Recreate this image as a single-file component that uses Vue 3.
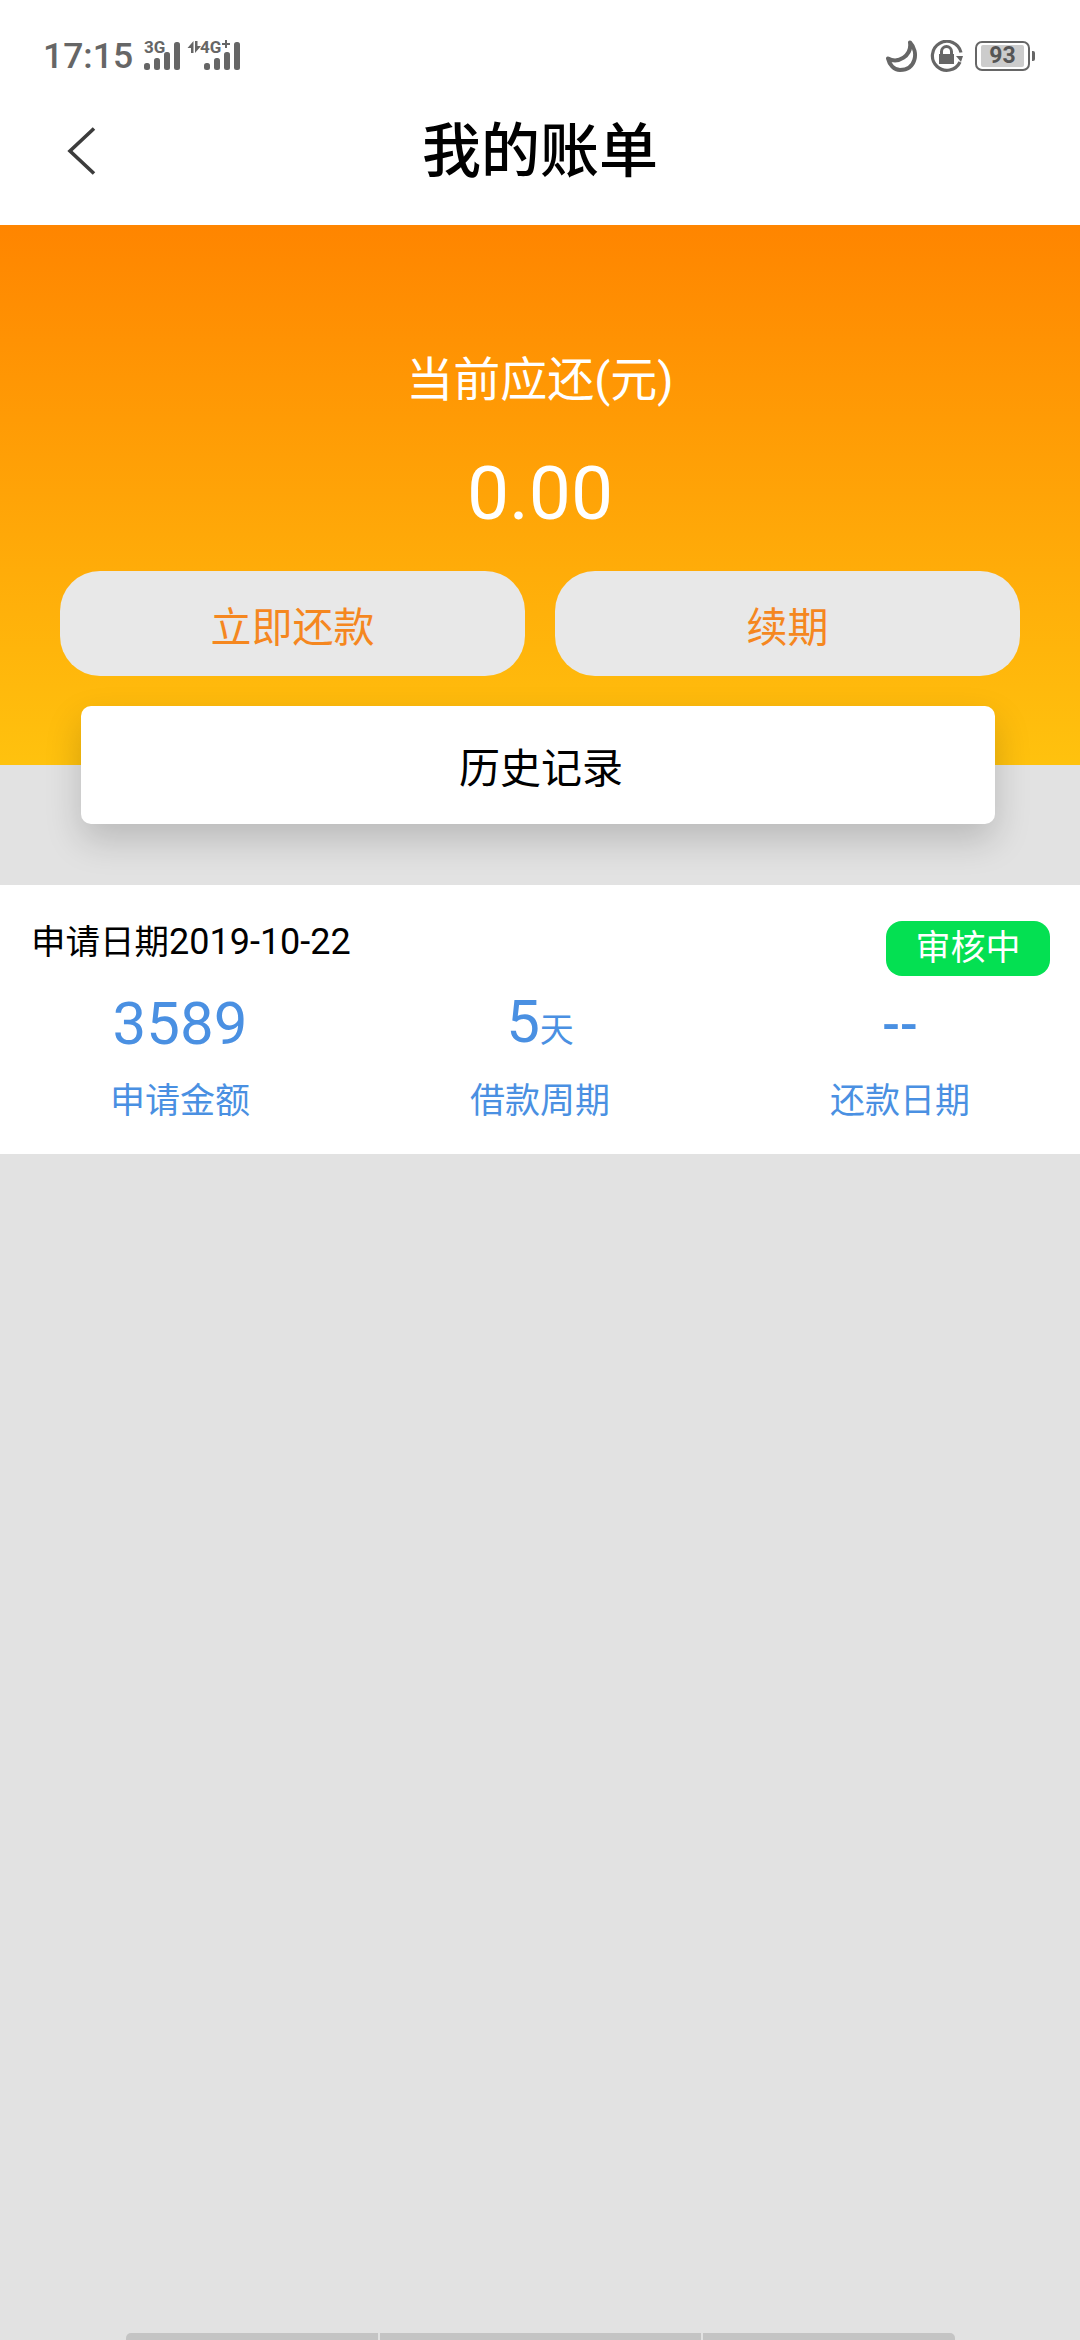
<script setup>
const stats = [
  { key: 'amount', value: '3589', unit: '', label: '申请金额' },
  { key: 'period', value: '5', unit: '天', label: '借款周期' },
  { key: 'repay', value: '--', unit: '', label: '还款日期' },
];
const signalBars = [
  { x: 2, y: 22, w: 6, h: 7 },
  { x: 12, y: 17, w: 6, h: 12 },
  { x: 22, y: 11, w: 6, h: 18 },
  { x: 32, y: 1, w: 6, h: 28 },
  { x: 62, y: 22, w: 6, h: 7 },
  { x: 72, y: 17, w: 6, h: 12 },
  { x: 82, y: 11, w: 6, h: 18 },
  { x: 92, y: 1, w: 6, h: 28 },
];
</script>

<template>
  <div class="page">
    <header class="top">
      <div class="status-bar">
        <span class="time">17:15</span>
        <svg class="signal" width="100" height="38" viewBox="0 -8 100 38">
          <text x="2" y="11.5" class="signal-text">3G</text>
          <rect v-for="bar in signalBars" :key="bar.x" :x="bar.x" :y="bar.y" :width="bar.w" :height="bar.h" rx="2.5" fill="#666" />
          <path d="M51.5 0L51.5 12L49 12L49 7L45.5 7Z M53 12L53 0L55.5 0L55.5 5L59 5Z" fill="#666" />
          <text x="58" y="11.5" class="signal-text">4G</text>
          <path d="M83 -1h2v3h3v2h-3v3h-2v-3h-3v-2h3z" fill="#666" />
        </svg>
        <div class="status-right">
          <svg class="moon" width="33" height="32" viewBox="0 0 33 32">
            <path d="M24 2.5C33 12 30 30 14 30C8 30 3.5 25 2 18.5C12 24 26 16 24 2.5Z" fill="none" stroke="#666" stroke-width="4" stroke-linejoin="round" />
          </svg>
          <svg class="rotate-lock" width="34" height="32" viewBox="0 0 34 32">
            <path d="M30 22A14.5 14.5 0 1 1 31 12.5" fill="none" stroke="#666" stroke-width="3.2" />
            <path d="M33 16 L26 16 L31 22 Z" fill="#666" />
            <rect x="9" y="14" width="15" height="10" fill="#666" />
            <path d="M11.5 14.5V11.5A5 5 0 0 1 21.5 11.5V14.5" fill="none" stroke="#666" stroke-width="3" />
          </svg>
          <div class="battery">
            <div class="battery-level">93</div>
          </div>
        </div>
      </div>
      <nav class="nav">
        <svg class="back" width="30" height="50" viewBox="0 0 30 50">
          <path d="M27 2.5L3 25L27 47.5" fill="none" stroke="#3c3c3c" stroke-width="3.6" />
        </svg>
        <h1 class="title">我的账单</h1>
        <span></span>
      </nav>
    </header>

    <section class="hero">
      <div class="hero-label">当前应还(元)</div>
      <div class="hero-value">0.00</div>
      <div class="hero-actions">
        <button type="button" class="action">立即还款</button>
        <button type="button" class="action">续期</button>
      </div>
    </section>

    <div class="history">历史记录</div>

    <section class="bill">
      <div class="bill-head">
        <span class="bill-date">申请日期<span class="bill-date-num">2019-10-22</span></span>
        <span class="bill-status">审核中</span>
      </div>
      <div class="bill-stats">
        <div v-for="item in stats" :key="item.key" class="stat" :class="`stat--${item.key}`">
          <div class="stat-value">{{ item.value }}<span v-if="item.unit" class="stat-unit">{{ item.unit }}</span></div>
          <div class="stat-label">{{ item.label }}</div>
        </div>
      </div>
    </section>

    <footer class="bottom-bars">
      <span class="bar bar--first"></span>
      <span class="bar bar--middle"></span>
      <span class="bar bar--last"></span>
    </footer>
  </div>
</template>

<style>
html,
body {
  margin: 0;
  background: #e2e2e2;
}
</style>

<style scoped>
.page {
  width: 1080px;
  height: 2340px;
  display: flex;
  flex-direction: column;
  background: #e2e2e2;
  font-family: Roboto, "Noto Sans CJK SC", sans-serif;
  overflow: hidden;
}

.top {
  background: #fff;
  height: 225px;
}

.status-bar {
  height: 76px;
  box-sizing: border-box;
  padding: 36px 50px 0 43px;
  display: flex;
  align-items: center;
  color: #666;
}

.time {
  font-size: 35.5px;
  font-weight: 500;
  line-height: 40px;
}

.signal {
  margin-left: 9px;
  margin-top: -9px;
}

.signal-text {
  font-family: Roboto, sans-serif;
  font-size: 17px;
  font-weight: 700;
  fill: #666;
}

.status-right {
  margin-left: auto;
  display: flex;
  align-items: center;
}

.moon {
  margin-right: 11px;
}

.rotate-lock {
  margin-right: 11px;
}

.battery {
  position: relative;
  width: 55px;
  height: 30px;
  box-sizing: border-box;
  border: 2px solid #666;
  border-radius: 7px;
  padding: 2px 4px;
}

.battery::after {
  content: "";
  position: absolute;
  right: -7px;
  top: 8px;
  width: 3px;
  height: 10px;
  border-radius: 0 2px 2px 0;
  background: #666;
}

.battery-level {
  height: 100%;
  background: #ccc;
  border-radius: 2px;
  font-size: 23px;
  font-weight: 700;
  line-height: 22px;
  text-align: center;
  color: #555;
}

.nav {
  height: 149px;
  display: grid;
  grid-template-columns: 1fr auto 1fr;
  align-items: center;
}

.back {
  margin-left: 67px;
}

.title {
  margin: 2px 0 0;
  font-size: 59px;
  font-weight: 500;
  color: #000;
  line-height: 80px;
}

.hero {
  height: 540px;
  box-sizing: border-box;
  padding: 123px 60px 0;
  background: linear-gradient(180deg, #ff8500 0%, #ffc20e 100%);
  color: #fff;
  text-align: center;
}

.hero-label {
  font-size: 47px;
  line-height: 64px;
}

.hero-value {
  margin-top: 36px;
  font-size: 75px;
  line-height: 90px;
}

.hero-actions {
  margin-top: 33px;
  display: grid;
  grid-template-columns: 1fr 1fr;
  gap: 30px;
}

.action {
  height: 105px;
  border: none;
  border-radius: 40px;
  background: #e8e8e8;
  color: #f5871f;
  font-family: inherit;
  font-size: 41px;
  padding: 0;
}

.history {
  position: relative;
  height: 118px;
  margin: -59px 85px 0 81px;
  padding-left: 6px;
  border-radius: 10px;
  background: #fff;
  box-shadow: 0 16px 36px rgba(0, 0, 0, 0.18);
  display: flex;
  align-items: center;
  justify-content: center;
  font-size: 41px;
  color: #000;
}

.bill {
  margin-top: 61px;
  height: 269px;
  background: #fff;
  box-sizing: border-box;
  padding-top: 36px;
}

.bill-head {
  display: flex;
  justify-content: space-between;
  align-items: flex-start;
  padding: 0 30px 0 31px;
}

.bill-date {
  font-size: 34.5px;
  line-height: 42px;
  color: #000;
}

.bill-date-num {
  font-size: 36px;
}

.bill-status {
  width: 164px;
  height: 55px;
  border-radius: 16px;
  background: #04e052;
  color: #fff;
  font-size: 35px;
  line-height: 55px;
  text-align: center;
}

.bill-stats {
  display: grid;
  grid-template-columns: repeat(3, 1fr);
  color: #4a90e2;
  text-align: center;
}

.stat-value {
  height: 92px;
  font-size: 60px;
  line-height: 95px;
}

.stat--period .stat-value {
  line-height: 91px;
}

.stat--repay .stat-value {
  font-size: 52px;
  font-weight: 500;
  line-height: 98px;
}

.stat-unit {
  font-size: 34px;
}

.stat-label {
  font-size: 35px;
  line-height: 68px;
}

.bottom-bars {
  margin-top: auto;
  height: 7px;
  display: flex;
  gap: 2px;
  padding-left: 126px;
}

.bar {
  background: #c4c4c4;
}

.bar--first {
  width: 252px;
  border-radius: 5px 0 0 0;
}

.bar--middle {
  width: 321px;
}

.bar--last {
  width: 252px;
  border-radius: 0 5px 0 0;
}
</style>
